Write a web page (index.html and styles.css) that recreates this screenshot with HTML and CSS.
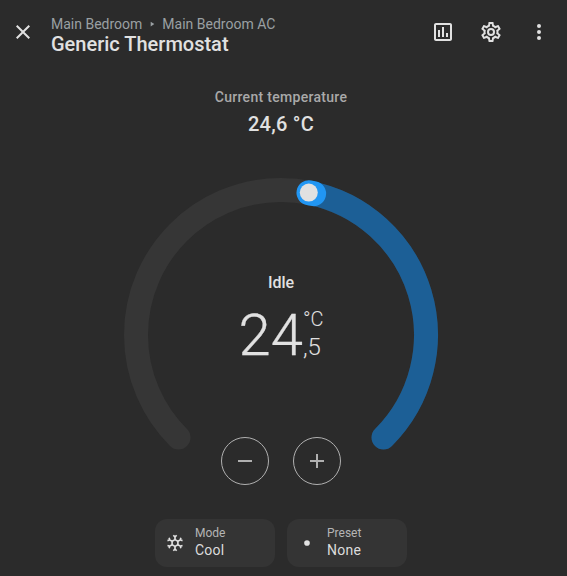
FILE: index.html
```html
<!DOCTYPE html>
<html lang="en">
<head>
    <meta charset="UTF-8">
    <meta name="viewport" content="width=device-width, initial-scale=1.0">
    <title>Generic Thermostat</title>
    <link rel="stylesheet" href="styles.css">
</head>
<body>
    <div class="dialog">
        <div class="header">
            <svg class="icon close-icon" viewBox="0 0 24 24"><path d="M19,6.41L17.59,5L12,10.59L6.41,5L5,6.41L10.59,12L5,17.59L6.41,19L12,13.41L17.59,19L19,17.59L13.41,12L19,6.41Z"/></svg>
            <div class="titles">
                <div class="breadcrumb">
                    <span>Main Bedroom</span>
                    <svg class="crumb-sep" viewBox="0 0 24 24"><path d="M8,5.14V19.14L19,12.14L8,5.14Z"/></svg>
                    <span>Main Bedroom AC</span>
                </div>
                <div class="title">Generic Thermostat</div>
            </div>
            <div class="actions">
                <svg class="icon" viewBox="0 0 24 24"><path d="M9,17H7V10H9V17M13,17H11V7H13V17M17,17H15V13H17V17M19,19H5V5H19V19.1M19,3H5C3.9,3 3,3.9 3,5V19C3,20.1 3.9,21 5,21H19C20.1,21 21,20.1 21,19V5C21,3.9 20.1,3 19,3Z"/></svg>
                <svg class="icon" viewBox="0 0 24 24"><path d="M12,8A4,4 0 0,1 16,12A4,4 0 0,1 12,16A4,4 0 0,1 8,12A4,4 0 0,1 12,8M12,10A2,2 0 0,0 10,12A2,2 0 0,0 12,14A2,2 0 0,0 14,12A2,2 0 0,0 12,10M10,22C9.75,22 9.54,21.82 9.5,21.58L9.13,18.93C8.5,18.68 7.96,18.34 7.44,17.94L4.95,18.95C4.73,19.03 4.46,18.95 4.34,18.73L2.34,15.27C2.21,15.05 2.27,14.78 2.46,14.63L4.57,12.97L4.5,12L4.57,11L2.46,9.37C2.27,9.22 2.21,8.95 2.34,8.73L4.34,5.27C4.46,5.05 4.73,4.96 4.95,5.05L7.44,6.05C7.96,5.66 8.5,5.32 9.13,5.07L9.5,2.42C9.54,2.18 9.75,2 10,2H14C14.25,2 14.46,2.18 14.5,2.42L14.87,5.07C15.5,5.32 16.04,5.66 16.56,6.05L19.05,5.05C19.27,4.96 19.54,5.05 19.66,5.27L21.66,8.73C21.79,8.95 21.73,9.22 21.54,9.37L19.43,11L19.5,12L19.43,13L21.54,14.63C21.73,14.78 21.79,15.05 21.66,15.27L19.66,18.73C19.54,18.95 19.27,19.04 19.05,18.95L16.56,17.95C16.04,18.34 15.5,18.68 14.87,18.93L14.5,21.58C14.46,21.82 14.25,22 14,22H10M11.25,4L10.88,6.61C9.68,6.86 8.62,7.5 7.85,8.39L5.44,7.35L4.69,8.65L6.8,10.2C6.4,11.37 6.4,12.64 6.8,13.8L4.68,15.36L5.43,16.66L7.86,15.62C8.63,16.5 9.68,17.14 10.87,17.38L11.24,20H12.76L13.13,17.39C14.32,17.14 15.37,16.5 16.14,15.62L18.57,16.66L19.32,15.36L17.2,13.81C17.6,12.64 17.6,11.37 17.2,10.2L19.31,8.65L18.56,7.35L16.15,8.39C15.38,7.5 14.32,6.86 13.12,6.62L12.75,4H11.25Z"/></svg>
                <svg class="icon" viewBox="0 0 24 24"><path d="M12,16A2,2 0 0,1 14,18A2,2 0 0,1 12,20A2,2 0 0,1 10,18A2,2 0 0,1 12,16M12,10A2,2 0 0,1 14,12A2,2 0 0,1 12,14A2,2 0 0,1 10,12A2,2 0 0,1 12,10M12,4A2,2 0 0,1 14,6A2,2 0 0,1 12,8A2,2 0 0,1 10,6A2,2 0 0,1 12,4Z"/></svg>
            </div>
        </div>

        <div class="current">
            <div class="current-label">Current temperature</div>
            <div class="current-value">24,6 °C</div>
        </div>

        <div class="dial">
            <svg class="dial-arc" viewBox="0 0 320 320">
                <path class="track" d="M57.5 262.5 A145 145 0 1 1 262.5 262.5"/>
                <path class="value" d="M188 17.7 A145 145 0 0 1 262.5 262.5"/>
                <path class="thumb-ring" d="M188 17.7 A145 145 0 0 1 192.6 18.7"/>
                <circle class="thumb" cx="187.8" cy="17.6" r="9"/>
            </svg>
            <div class="dial-info">
                <div class="dial-state">Idle</div>
                <div class="dial-temp">
                    <span class="temp-main">24</span>
                    <div class="temp-side">
                        <span class="temp-unit">°C</span>
                        <span class="temp-decimal">,5</span>
                    </div>
                </div>
            </div>
            <div class="dial-buttons">
                <div class="round-btn">
                    <svg viewBox="0 0 24 24"><path d="M19,13H5V11H19V13Z"/></svg>
                </div>
                <div class="round-btn">
                    <svg viewBox="0 0 24 24"><path d="M19,13H13V19H11V13H5V11H11V5H13V11H19V13Z"/></svg>
                </div>
            </div>
        </div>

        <div class="chips">
            <div class="chip">
                <svg class="chip-icon" viewBox="0 0 24 24"><path d="M20.79,13.95L18.46,14.57L16.46,13.44V10.56L18.46,9.43L20.79,10.05L21.31,8.12L19.54,7.65L20,5.88L18.07,5.36L17.45,7.69L15.45,8.82L13,7.38V5.12L14.71,3.41L13.29,2L12,3.29L10.71,2L9.29,3.41L11,5.12V7.38L8.5,8.82L6.5,7.69L5.92,5.36L4,5.88L4.47,7.65L2.7,8.12L3.22,10.05L5.55,9.43L7.55,10.56V13.45L5.55,14.58L3.22,13.96L2.7,15.89L4.47,16.36L4,18.12L5.93,18.64L6.55,16.31L8.55,15.18L11,16.62V18.88L9.29,20.59L10.71,22L12,20.71L13.29,22L14.7,20.59L13,18.88V16.62L15.5,15.17L17.5,16.3L18.12,18.63L20,18.12L19.53,16.35L21.3,15.88L20.79,13.95M9.5,10.56L12,9.11L14.5,10.56V13.44L12,14.89L9.5,13.44V10.56Z"/></svg>
                <div class="chip-text">
                    <span class="chip-label">Mode</span>
                    <span class="chip-value">Cool</span>
                </div>
            </div>
            <div class="chip">
                <svg class="chip-icon" viewBox="0 0 24 24"><circle cx="12" cy="12" r="3.4"/></svg>
                <div class="chip-text">
                    <span class="chip-label">Preset</span>
                    <span class="chip-value">None</span>
                </div>
            </div>
        </div>
    </div>
</body>
</html>
```

FILE: styles.css
```css
* {
    margin: 0;
    padding: 0;
    box-sizing: border-box;
}

body {
    font-family: Roboto, sans-serif;
    background: #2b2b2b;
    color: #e1e1e1;
    overflow: hidden;
}

.dialog {
    width: 567px;
    height: 576px;
    display: flex;
    flex-direction: column;
    align-items: center;
}

.header {
    width: 100%;
    display: flex;
    align-items: flex-start;
    padding: 14px 16px 0 11px;
}

.icon {
    width: 24px;
    height: 24px;
    fill: #e1e1e1;
    display: block;
}

.close-icon {
    margin-top: 6px;
}

.titles {
    flex: 1;
    margin-left: 16px;
}

.breadcrumb {
    display: flex;
    align-items: center;
    gap: 6px;
    font-size: 14px;
    line-height: 20px;
    color: #9aa0a3;
}

.crumb-sep {
    width: 8px;
    height: 8px;
    fill: #9aa0a3;
}

.title {
    font-size: 20px;
    line-height: 20px;
    font-weight: 500;
    color: #e1e1e1;
}

.actions {
    display: flex;
    gap: 24px;
    margin-top: 6px;
}

.current,
.dial,
.chips {
    margin-right: 5px;
}

.current {
    margin-top: 33px;
    text-align: center;
}

.current-label {
    font-size: 14px;
    line-height: 20px;
    font-weight: 500;
    letter-spacing: 0.3px;
    color: #a9a9a9;
}

.current-value {
    font-size: 20px;
    line-height: 24px;
    font-weight: 500;
    letter-spacing: 0.25px;
    margin-top: 5px;
}

.dial {
    position: relative;
    width: 320px;
    height: 320px;
    margin-top: 39px;
}

.dial-arc {
    display: block;
    width: 320px;
    height: 320px;
}

.track,
.value,
.thumb-ring {
    fill: none;
    stroke-width: 24;
    stroke-linecap: round;
}

.track {
    stroke: #363636;
}

.value {
    stroke: #1c5f96;
}

.thumb-ring {
    stroke: #2196f3;
    stroke-width: 25;
}

.thumb {
    fill: #e1e1e1;
}

.dial-info {
    position: absolute;
    top: 98px;
    left: 0;
    right: 0;
    display: flex;
    flex-direction: column;
    align-items: center;
}

.dial-state {
    font-size: 16px;
    line-height: 20px;
    font-weight: 500;
}

.dial-temp {
    display: flex;
    margin-top: 10px;
}

.temp-main {
    font-size: 58px;
    line-height: 64px;
    font-weight: 300;
    -webkit-text-stroke: 0.3px #e1e1e1;
}

.temp-side {
    display: flex;
    flex-direction: column;
    line-height: 25px;
    padding-top: 4px;
}

.temp-unit {
    font-size: 20px;
    font-weight: 300;
}

.temp-decimal {
    font-size: 24px;
    font-weight: 300;
    margin-top: 3px;
}

.dial-buttons {
    position: absolute;
    top: 262px;
    left: 0;
    right: 0;
    display: flex;
    justify-content: center;
    gap: 24px;
}

.round-btn {
    width: 48px;
    height: 48px;
    border: 1px solid #b0b0b0;
    border-radius: 50%;
    display: flex;
    align-items: center;
    justify-content: center;
}

.round-btn svg {
    width: 24px;
    height: 24px;
    fill: #b0b0b0;
}

.chips {
    display: flex;
    gap: 12px;
    margin-top: 24px;
}

.chip {
    width: 120px;
    height: 48px;
    background: #343434;
    border-radius: 12px;
    display: flex;
    align-items: center;
    padding: 0 0 2px 10px;
}

.chip-icon {
    width: 20px;
    height: 20px;
    fill: #e1e1e1;
    margin-top: 2px;
}

.chip-text {
    display: flex;
    flex-direction: column;
    margin-left: 10px;
}

.chip-label {
    font-size: 12px;
    line-height: 16px;
    color: #b5b5b5;
}

.chip-value {
    font-size: 14px;
    line-height: 18px;
    letter-spacing: 0.25px;
    color: #dcdcdc;
}
```
